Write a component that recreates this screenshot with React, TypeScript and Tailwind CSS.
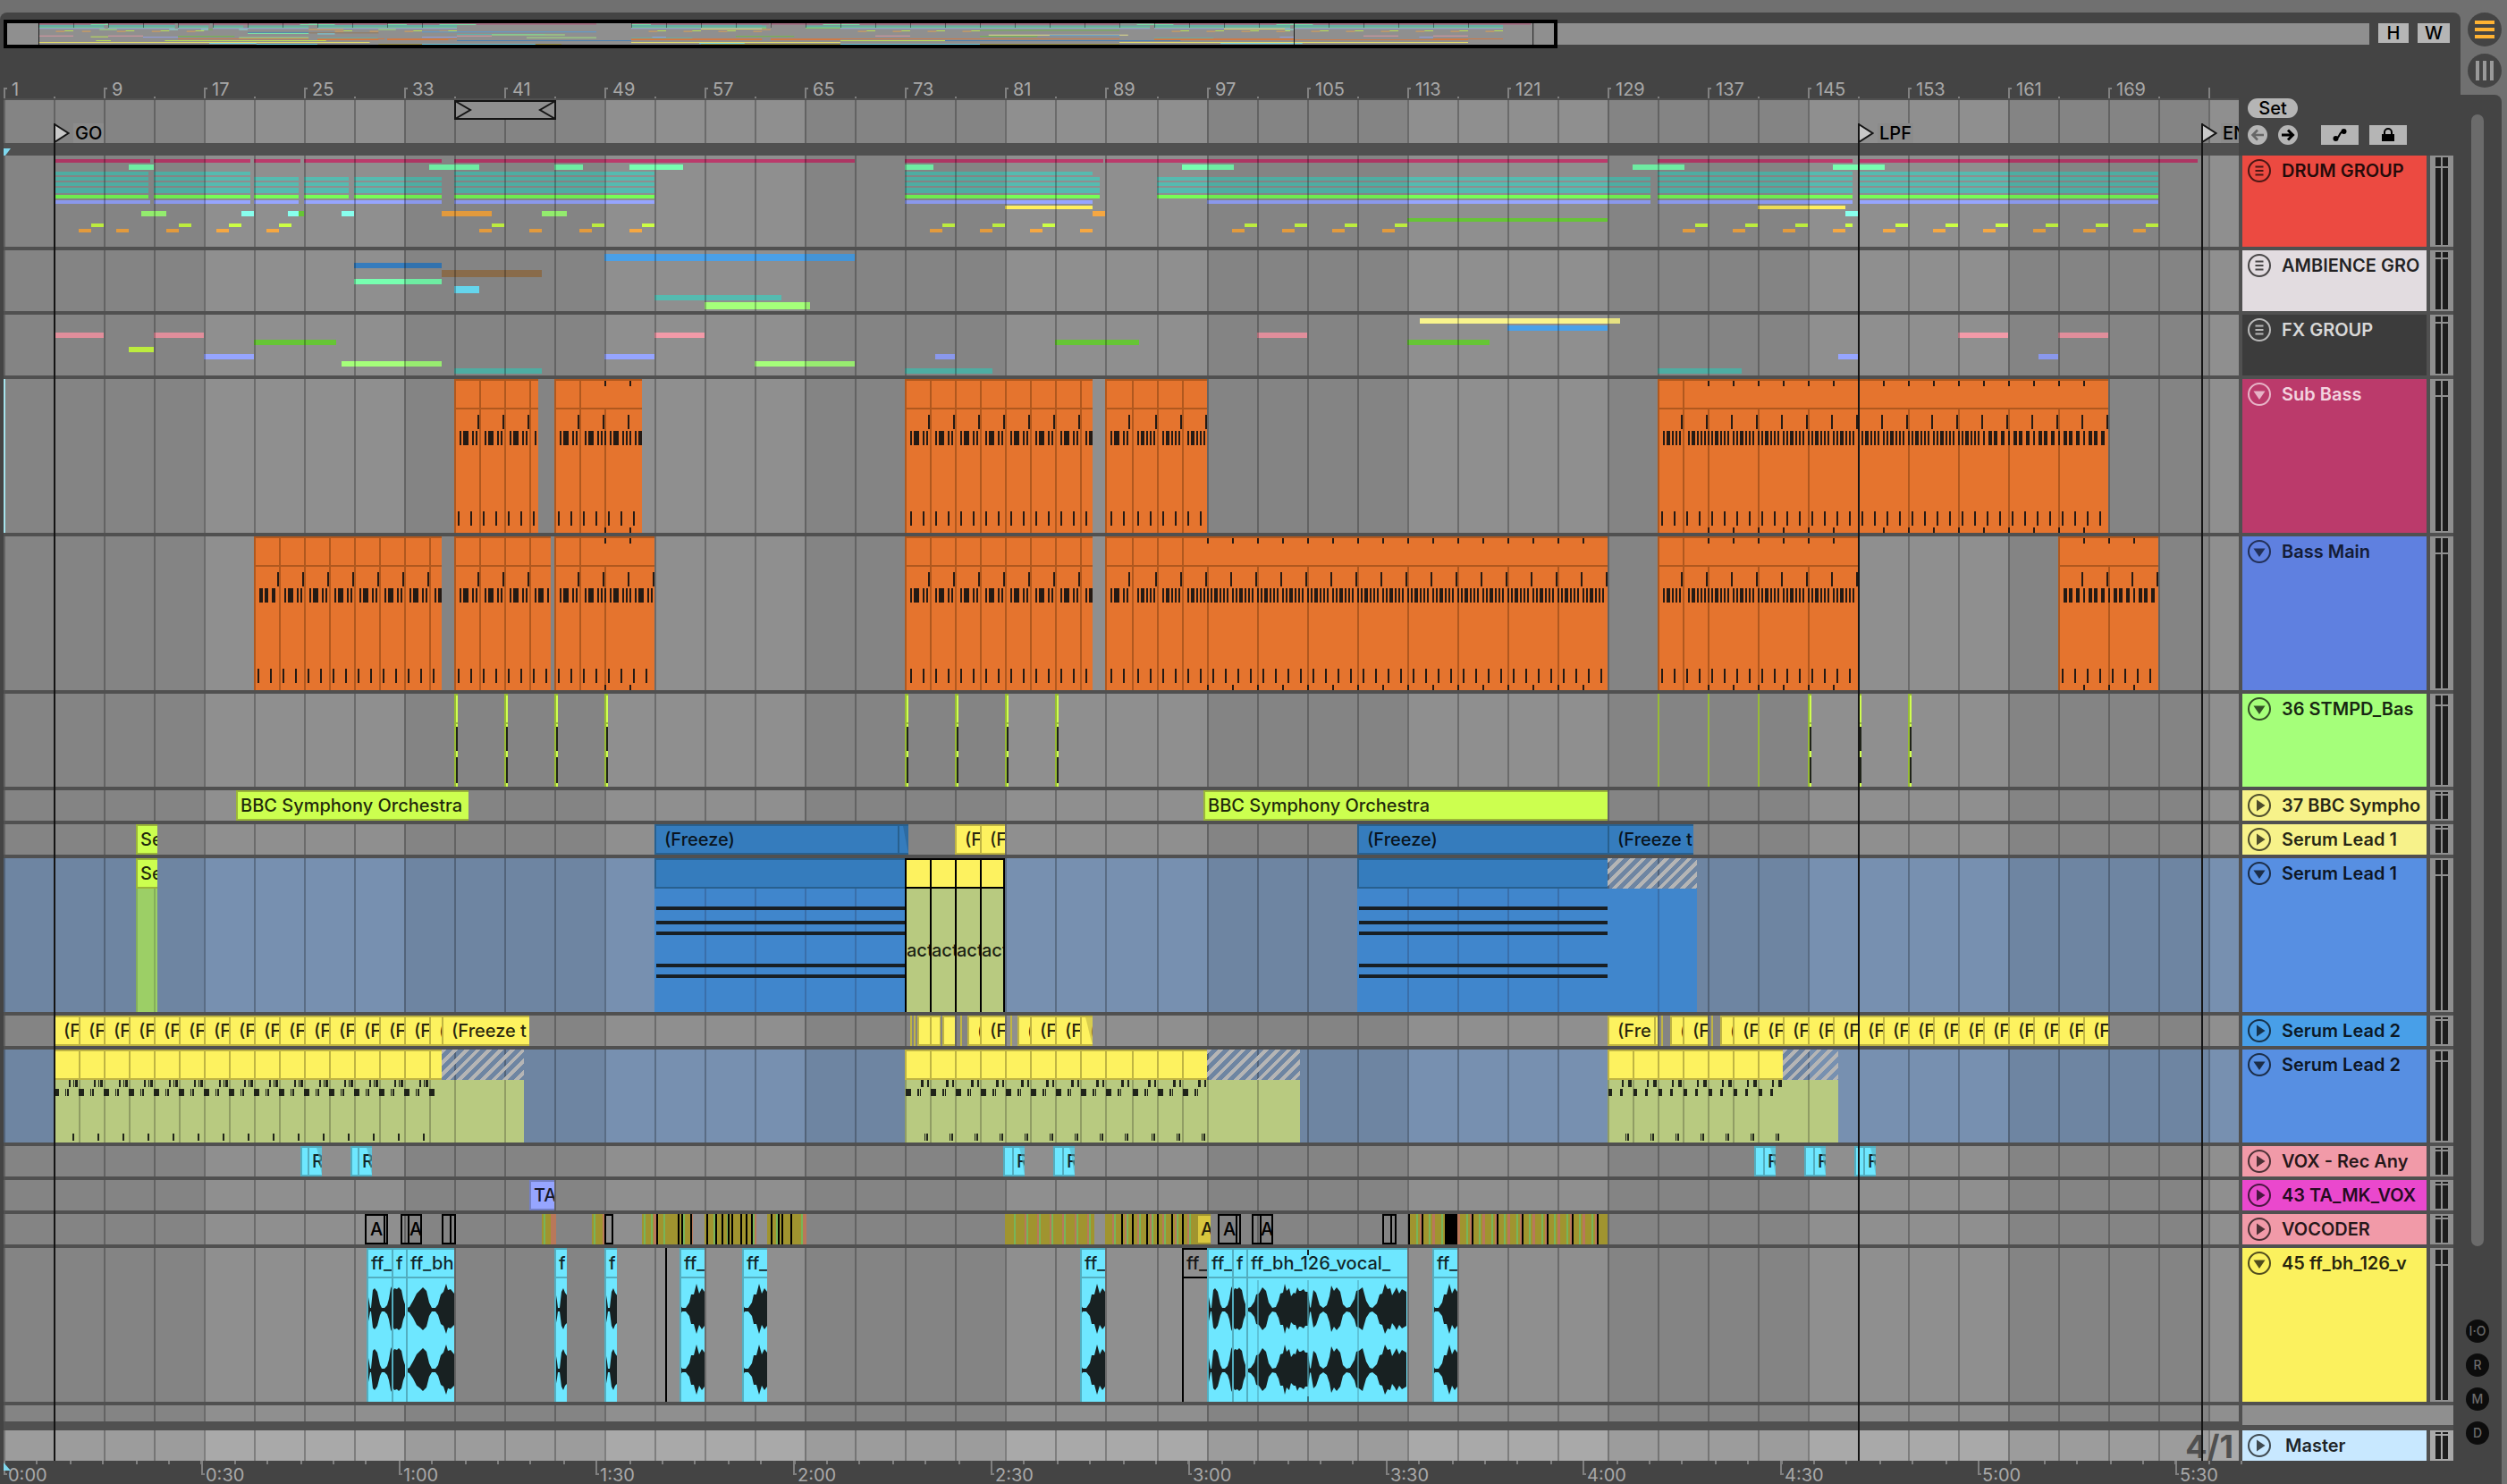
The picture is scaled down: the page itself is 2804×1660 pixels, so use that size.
import React from "react";

const BAR = 7.0056;
/** Horizontal position of a bar inside a lane, snapped to the 2px device grid. */
const X = (bar: number) => 2 * Math.round(BAR * (bar - 1));
const span = (from: number, to: number) => ({ left: X(from), width: X(to) - X(from) });

const BAR_LINES = Array.from({ length: 45 }, (_, i) => 1 + i * 4);
const DARK_BANDS = [1, 33, 65, 97, 129, 161].map((b) => [b, b + 16] as const);

type Range = [number, number];
type Strip = { y: number; h: number; tone: string; at: Range[] };

const CRIMSON = "text-[#bb3a6b]";
const MINT = "text-[#77ffb0]";
const TEAL = "text-[#55bbb0]";
const GREEN = "text-[#77ff55]";
const PERI = "text-[#96a5ff]";
const YELLOW = "text-[#ffef5a]";
const LEAF = "text-[#9fff77]";
const ICE = "text-[#88ffee]";
const ORANGE = "text-[#f5a742]";
const FOREST = "text-[#66c535]";
const LIME = "text-[#ccff44]";
const SKY = "text-[#4aa0e8]";
const PINK = "text-[#f29aa8]";

const beats = (starts: number[], len = 1): Range[] => starts.map((s) => [s, s + len]);
const hats: Range[] = [[5, 12.5], [13, 20.65], [21, 24.5], [25, 28.5], [29, 36], [37, 53], [73, 88.5], [93, 132.5], [133, 148.6], [149, 173]];

const DRUMS: Strip[] = [
  { y: 4, h: 4, tone: CRIMSON, at: [[5, 12.65], [13, 20.65], [21, 24.65], [25, 36], [37, 69], [73, 88.85], [89, 129], [133, 148.6], [149, 176.2]] },
  { y: 10, h: 6, tone: MINT, at: [[11, 13], [35, 39], [45, 47.25], [51, 55.2], [73, 75.25], [95, 99.2], [131, 135.2], [147, 151.2]] },
  { y: 18, h: 4, tone: TEAL, at: [[5, 12.5], [13, 20.65], [37, 53], [73, 88], [133, 148.6], [149, 173]] },
  { y: 24, h: 4, tone: TEAL, at: hats },
  { y: 30, h: 4, tone: TEAL, at: hats },
  { y: 36, h: 6, tone: TEAL, at: hats },
  { y: 44, h: 4, tone: GREEN, at: hats },
  { y: 50, h: 4, tone: PERI, at: [[5, 12.65], [13, 20.65], [21, 24.5], [25, 36], [37, 53], [73, 88], [97, 132.5], [133, 148.6], [149, 173]] },
  { y: 56, h: 4, tone: YELLOW, at: [[81, 88], [141, 148]] },
  { y: 62, h: 6, tone: LEAF, at: [[12, 14], [44, 46]] },
  { y: 62, h: 6, tone: ICE, at: [[20, 21], [23.65, 24.5], [28, 29], [148, 149]] },
  { y: 62, h: 6, tone: FOREST, at: [[24.5, 25]] },
  { y: 62, h: 6, tone: ORANGE, at: [[36, 40], [88, 89]] },
  { y: 70, h: 4, tone: FOREST, at: [[113, 129]] },
  { y: 76, h: 4, tone: LIME, at: [...beats([8, 15, 19, 23, 40, 48, 52, 76, 80, 84, 100, 104, 108, 112, 136, 140, 144, 152, 156, 160, 164, 168, 172]), [148, 148.6]] },
  { y: 82, h: 4, tone: ORANGE, at: beats([7, 10, 14, 18, 22, 39, 43, 47, 51, 75, 79, 83, 87, 99, 103, 107, 111, 135, 139, 143, 147, 151, 155, 159, 163, 167, 171]) },
];

const AMBIENCE: Strip[] = [
  { y: 4, h: 8, tone: SKY, at: [[49, 69]] },
  { y: 14, h: 6, tone: "text-[#357cbd]", at: [[29, 36]] },
  { y: 22, h: 8, tone: "text-[#947450]", at: [[36, 44]] },
  { y: 32, h: 6, tone: MINT, at: [[29, 36]] },
  { y: 40, h: 8, tone: "text-[#6ee7ff]", at: [[37, 39]] },
  { y: 50, h: 6, tone: TEAL, at: [[53, 63.1]] },
  { y: 58, h: 8, tone: "text-[#a5ff7a]", at: [[57, 65.4]] },
];

const FX: Strip[] = [
  { y: 4, h: 6, tone: "text-[#f9f48c]", at: [[114, 130]] },
  { y: 12, h: 6, tone: SKY, at: [[121, 129]] },
  { y: 20, h: 6, tone: PINK, at: [[5, 9], [13, 17], [53, 57], [101, 105], [157, 161], [165, 169]] },
  { y: 28, h: 6, tone: FOREST, at: [[21, 27.5], [85, 91.7], [113, 119.6]] },
  { y: 36, h: 6, tone: LIME, at: [[11, 13]] },
  { y: 44, h: 6, tone: PERI, at: [[17, 21], [49, 53], [75.4, 77], [147.4, 149], [163.4, 165]] },
  { y: 52, h: 6, tone: "text-[#a5ff7a]", at: [[28, 36], [61, 69]] },
  { y: 60, h: 6, tone: TEAL, at: [[37, 43.9], [73, 80], [133, 139.8]] },
];

/* ---------- lane backgrounds ---------- */

function Grid() {
  return (
    <>
      {DARK_BANDS.map(([a, b]) => (
        <i key={a} className="absolute inset-y-0 bg-black/[0.075]" style={span(a, b)} />
      ))}
      {BAR_LINES.map((b) => (
        <i key={b} className="absolute inset-y-0 w-0.5 bg-black/25" style={{ left: X(b) }} />
      ))}
    </>
  );
}

function GroupStrips({ strips }: { strips: Strip[] }) {
  return (
    <>
      {strips.map((s, i) =>
        s.at.map(([a, b]) => (
          <i key={`${i}-${a}`} className={`absolute bg-current ${s.tone}`} style={{ ...span(a, b), top: s.y, height: s.h }} />
        )),
      )}
      <Grid />
    </>
  );
}

/* ---------- generic clips ---------- */

const CLIP = {
  lime: "bg-[#ccff4f] border-[#9bb53a]",
  yellow: "bg-[#fdf25f] border-[#bfb443]",
  blue: "bg-[#357cbd] border-[#28608f]",
  cyan: "bg-[#6ee7ff] border-[#53aec0]",
  peri: "bg-[#96a5ff] border-[#7480c5]",
  mustard: "bg-[#d9c73e] border-[#a0942f]",
};
type Tone = keyof typeof CLIP;

type ClipProps = { from: number; to: number; tone: Tone; pad?: "sm" | "lg"; children?: React.ReactNode };
/** Title bar of a clip: 34px high, text is cut where the clip ends. */
function Clip({ from, to, tone, pad = "sm", children }: ClipProps) {
  return (
    <div
      className={`absolute top-0 flex h-[34px] items-center overflow-hidden border-y-2 border-l-2 font-medium whitespace-nowrap text-black/85 ${CLIP[tone]} ${pad === "lg" ? "pl-[9px]" : "pl-[3px]"}`}
      style={span(from, to)}
    >
      {children}
    </div>
  );
}

function Line({ at, tone }: { at: number; tone: string }) {
  return <i className={`absolute inset-y-0 w-0.5 ${tone}`} style={{ left: X(at) }} />;
}

/* ---------- bass tracks ---------- */

type BassClip = { from: number; to: number; cuts: number[]; loops: number[] };
const every = (from: number, to: number, step = 2) => {
  const out: number[] = [];
  for (let b = from; b < to; b += step) out.push(b);
  return out;
};

const SUB_BASS: BassClip[] = [
  { from: 37, to: 43.65, cuts: every(37, 43.6), loops: [] },
  { from: 45, to: 52, cuts: [45, 47], loops: [49, 51] },
  { from: 73, to: 88, cuts: every(73, 88), loops: [] },
  { from: 89, to: 97, cuts: every(89, 97), loops: [] },
  { from: 133, to: 169, cuts: [133, 135], loops: every(137, 169) },
];
const BASS_MAIN: BassClip[] = [
  { from: 21, to: 36, cuts: every(21, 36), loops: [] },
  { from: 37, to: 44.7, cuts: every(37, 44), loops: [] },
  { from: 45, to: 53, cuts: [45, 47], loops: [49, 51] },
  { from: 73, to: 88, cuts: every(73, 88), loops: [] },
  { from: 89, to: 129, cuts: every(89, 97), loops: every(97, 129) },
  { from: 133, to: 149, cuts: [133, 135], loops: every(137, 149) },
  { from: 165, to: 173, cuts: [165], loops: [167, 169, 171] },
];

function notesFor(cell: number, loop: boolean): Range[] {
  if (cell === 21 || cell >= 159) return loop ? [[0, 2], [6, 4], [12, 4], [20, 4]] : [[6, 4], [12, 4], [20, 4]];
  if (cell >= 91) return loop ? [[0, 2], [4, 2], [8, 4], [14, 2], [18, 2], [22, 2]] : [[6, 2], [10, 4], [16, 2], [20, 2], [24, 2]];
  return loop ? [[0, 2], [6, 2], [10, 6], [20, 2], [24, 2]] : [[6, 2], [10, 6], [20, 2], [24, 2]];
}

function BassTrack({ clips }: { clips: BassClip[] }) {
  return (
    <>
      <Grid />
      {clips.map((c) => {
        const w = X(c.to) - X(c.from);
        const o = (b: number) => X(b) - X(c.from);
        const low = c.from >= 73 && c.from < 97 ? 6 : 4;
        return (
          <div key={c.from} className="absolute inset-y-0 overflow-hidden bg-[#e5742e]" style={span(c.from, c.to)}>
            <svg width={w} height="172" className="block" shapeRendering="crispEdges">
              <g className="fill-[#b0581e]">
                <rect x="0" y="0" width={w} height="2" />
                <rect x="0" y="32" width={w} height="2" />
                {c.cuts.map((b) => <rect key={b} x={o(b)} y="0" width="2" height="172" />)}
                {c.loops.filter((b) => (b - 1) % 4 === 0).map((b) => <rect key={b} x={o(b)} y="34" width="2" height="138" />)}
              </g>
              <g className="fill-[#241a14]">
                {c.loops.map((b) => (
                  <React.Fragment key={b}>
                    <rect x={o(b)} y="2" width="2" height="6" />
                    <rect x={o(b)} y="166" width="2" height="6" />
                  </React.Fragment>
                ))}
                {[...c.cuts, ...c.loops].map((b) => (
                  <React.Fragment key={b}>
                    <rect x={o(b) + 26} y="40" width="2" height="16" />
                    {notesFor(b, c.loops.includes(b)).map(([x, nw]) => (
                      <rect key={x} x={o(b) + x} y="58" width={nw} height="16" />
                    ))}
                    <rect x={o(b) + low} y="148" width="2" height="16" />
                    <rect x={o(b) + low + 14} y="148" width="2" height="16" />
                  </React.Fragment>
                ))}
              </g>
            </svg>
          </div>
        );
      })}
    </>
  );
}

/* ---------- audio hits of track 36 ---------- */

function StompTrack() {
  return (
    <>
      <Grid />
      {[133, 137, 141].map((b) => <Line key={b} at={b} tone="bg-[#97bb35]" />)}
      {[37, 41, 45, 49, 73, 77, 81, 85, 145, 149, 153].map((b) => (
        <svg key={b} width="4" height="104" className="absolute top-0" style={{ left: X(b) }} shapeRendering="crispEdges">
          <rect width="4" height="104" className="fill-[#97bb35]" />
          <rect x="2" y="2" width="2" height="30" className="fill-[#d0ff50]" />
          <rect x="2" y="34" width="2" height="70" className="fill-[#d0ff50]" />
          <rect x="2" y="37" width="2" height="27" className="fill-[#20241a]" />
          <rect x="2" y="71" width="2" height="29" className="fill-[#20241a]" />
        </svg>
      ))}
    </>
  );
}

/* ---------- Serum tracks ---------- */

const HATCH = "bg-[repeating-linear-gradient(135deg,#b5b5b5_0_4px,transparent_4px_9px)]";

function BodyLines({ from, to }: { from: number; to: number }) {
  return (
    <>
      {BAR_LINES.filter((b) => b > from && b < to).map((b) => (
        <i key={b} className="absolute inset-y-0 w-0.5 bg-[#396fab]" style={{ left: X(b) - X(from) }} />
      ))}
    </>
  );
}

function ChordClip({ from, to }: { from: number; to: number }) {
  return (
    <>
      <Clip from={from} to={to} tone="blue" />
      <div className="absolute top-[34px] bottom-0 overflow-hidden bg-[#4086cc]" style={span(from, to)}>
        <BodyLines from={from} to={to} />
        <svg width="100%" height="138" className="absolute inset-0 fill-[#181f24]" shapeRendering="crispEdges">
          {[20, 36, 48, 84, 96].map((y) => <rect key={y} x="2" y={y} width="100%" height="4" />)}
        </svg>
      </div>
    </>
  );
}

function SerumLead1Small() {
  return (
    <>
      <Grid />
      <Clip from={11.6} to={13.3} tone="lime">Se</Clip>
      <Clip from={53} to={73.2} tone="blue" pad="lg">(Freeze)</Clip>
      <Line at={72.4} tone="bg-[#28608f]" />
      <svg width="6" height="30" className="absolute top-0.5 fill-[#28608f]/60" style={{ left: X(73.2) - 6 }}>
        <path d="M0 0H6V30C4 22 2 10 0 0Z" />
      </svg>
      <Clip from={77} to={79} tone="yellow" pad="lg">(F</Clip>
      <Clip from={79} to={81} tone="yellow" pad="lg">(F</Clip>
      <Clip from={109} to={129} tone="blue" pad="lg">(Freeze)</Clip>
      <Clip from={129} to={135.9} tone="blue" pad="lg">(Freeze t</Clip>
    </>
  );
}

function SerumLead1() {
  return (
    <>
      <Grid />
      <Clip from={11.6} to={13.3} tone="lime">Se</Clip>
      <div className="absolute top-[34px] bottom-0 border-l-2 border-[#84ae5b] bg-[#9ccf66]" style={span(11.6, 13.3)} />
      <Line at={13} tone="top-[34px] bg-[#84ae5b]" />
      <ChordClip from={53} to={73} />
      {[73, 75, 77, 79].map((b) => (
        <div key={b} className={`absolute inset-y-0 flex flex-col border-l-2 border-black bg-[#b8ca80] ${b === 79 ? "border-r-2" : ""}`} style={span(b, b + 2)}>
          <div className="h-[34px] border-y-2 border-black bg-[#fdf25f]" />
          <div className="flex flex-1 items-center overflow-hidden font-medium text-black/85">act</div>
        </div>
      ))}
      <ChordClip from={109} to={129} />
      <div className="absolute inset-y-0 flex flex-col" style={span(129, 136.2)}>
        <div className={`h-[34px] ${HATCH}`} />
        <div className="relative flex-1 bg-[#4086cc]">
          <BodyLines from={129} to={136} />
        </div>
      </div>
    </>
  );
}

type Title = [number, number, string];
const LEAD2_TITLES: Title[] = [
  ...every(5, 35).map((b): Title => [b, b + 2, "(F"]),
  [35, 36, "("], [36, 43, "(Freeze t"],
  [74, 74.9, ""], [75, 75.5, ""], [76, 76.9, ""],
  [78, 79, "("], [79, 81, "(F"], [82, 83, "("], [83, 85, "(F"], [85, 87, "(F"], [87, 88, "("],
  [129, 133, "(Fre"], [134, 135, "("], [135, 137, "(F"], [138, 139, "("],
  ...every(139, 169).map((b): Title => [b, b + 2, "(F"]),
];

function SerumLead2Small() {
  return (
    <>
      <Grid />
      {[73.4, 73.7, 75.7, 75.9, 77.4, 81.4, 133.3, 137.3].map((b) => <Line key={b} at={b} tone="bg-[#bfb443]" />)}
      {LEAD2_TITLES.map(([a, b, t]) => (
        <Clip key={a} from={a} to={b} tone="yellow" pad="lg">{t}</Clip>
      ))}
      <Line at={132.75} tone="bg-[#bfb443]" />
      <svg width="8" height="30" className="absolute top-0.5 fill-[#bfb443]/60" style={{ left: X(88) - 8 }}>
        <path d="M0 0H8V30C5 22 3 10 0 0Z" />
      </svg>
    </>
  );
}

function ArpClip({ from, to, tail, a, b, c }: { from: number; to: number; tail: number; a: Range[]; b: Range[]; c: Range[] }) {
  const cells = every(from, to);
  const o = (bar: number) => X(bar) - X(from);
  return (
    <>
      <div className="absolute top-0 h-[34px] border-y-2 border-[#bfb443] bg-[#fdf25f]" style={span(from, to)}>
        {cells.map((s) => <i key={s} className="absolute inset-y-0 w-0.5 bg-[#bfb443]" style={{ left: o(s) }} />)}
      </div>
      <div className={`absolute top-0 h-[34px] ${HATCH}`} style={span(to, tail)} />
      <div className="absolute top-[34px] bottom-0 bg-[#b8ca80]" style={span(from, tail)}>
        <svg width="100%" height="70" className="absolute inset-0" shapeRendering="crispEdges">
          <g className="fill-[#909d64]">
            {cells.map((s) => <rect key={s} x={o(s)} y="0" width="2" height="70" />)}
            {BAR_LINES.filter((l) => l >= to && l < tail).map((l) => <rect key={l} x={o(l)} y="0" width="2" height="70" />)}
          </g>
          <g className="fill-[#20241a]">
            {cells.map((s) => (
              <React.Fragment key={s}>
                {o(s) + 20 < o(to) && a.map(([x, w]) => <rect key={x} x={o(s) + x} y="0" width={w} height="8" />)}
                {b.filter(([x]) => o(s) + x + 2 < o(to)).map(([x, w]) => <rect key={x} x={o(s) + x} y="10" width={w} height="8" />)}
                {o(s) + 26 < o(to) && c.map(([x, w]) => <rect key={x} x={o(s) + x} y="60" width={w} height="8" />)}
              </React.Fragment>
            ))}
          </g>
        </svg>
      </div>
    </>
  );
}

function SerumLead2() {
  return (
    <>
      <Grid />
      <ArpClip from={5} to={36} tail={42.5} a={[[17, 2], [22, 1], [24, 3]]} b={[[0, 6], [13, 1], [15, 2]]} c={[[21, 2]]} />
      <ArpClip from={73} to={97} tail={104.5} a={[[18, 3], [25, 2]]} b={[[1, 6], [14, 2], [17, 1]]} c={[[22, 1], [24, 2]]} />
      <ArpClip from={129} to={143} tail={147.4} a={[[16, 2], [23, 4]]} b={[[1, 4], [14, 3]]} c={[[20, 1], [22, 2]]} />
    </>
  );
}

/* ---------- vocals ---------- */

function VoxTrack() {
  return (
    <>
      <Grid />
      {[24.65, 28.65, 80.8, 84.8, 140.75, 144.75, 148.75].map((b) => (
        <React.Fragment key={b}>
          <Clip from={b} to={b + 0.65} tone="cyan" />
          <Clip from={b + 0.65} to={b + 1.75} tone="cyan">R</Clip>
          <svg width="6" height="30" className="absolute top-0.5 fill-[#53aec0]/60" style={{ left: X(b + 1.75) - 6 }}>
            <path d="M0 0H6V30C4 22 3 8 0 0Z" />
          </svg>
        </React.Fragment>
      ))}
    </>
  );
}

type Weave = { from: number; to: number; green: number[]; salmon: number[]; black: number[] };
const WEAVES: Weave[] = [
  { from: 602, to: 618, green: [604], salmon: [612, 614, 616], black: [] },
  { from: 658, to: 672, green: [660], salmon: [670], black: [] },
  { from: 714, to: 771, green: [716, 724, 738, 760], salmon: [727, 769], black: [730, 754, 758, 768] },
  { from: 784, to: 842, green: [794, 809, 824, 838], salmon: [840], black: [786, 796, 803, 810, 814, 824, 830, 836] },
  { from: 854, to: 898, green: [864, 880, 892], salmon: [894, 896], black: [858, 866, 870, 880] },
  { from: 1120, to: 1220, green: every(1130, 1218, 14), salmon: every(1142, 1220, 14), black: [] },
  { from: 1232, to: 1334, green: every(1242, 1334, 14), salmon: every(1240, 1334, 14), black: [1250, 1262, 1278, 1290, 1306, 1318] },
  { from: 1571, to: 1794, green: every(1580, 1790, 14), salmon: every(1584, 1794, 14), black: [1571, 1586, 1642, 1670, 1698, 1726, 1754, 1782] },
];
const BOXES: [number, number, number, string][] = [
  [404, 430, 423, "A"], [444, 468, 450, "A"], [490, 506, 497, ""], [672, 682, 682, ""],
  [1358, 1384, 1376, "A"], [1396, 1420, 1403, "A"], [1542, 1558, 1549, ""],
];

function VocoderTrack() {
  return (
    <>
      <Grid />
      {WEAVES.map((w) => (
        <svg key={w.from} width={w.to - w.from} height="34" className="absolute top-0 bg-[#a0942f]" style={{ left: w.from }} shapeRendering="crispEdges">
          <g className="fill-[#b9785a]">{w.salmon.map((x) => <rect key={x} x={x - w.from} width="3" height="34" />)}</g>
          <g className="fill-[#77b559]">{w.green.map((x) => <rect key={x} x={x - w.from} width="2" height="34" />)}</g>
          <g className="fill-black">
            {w.black.map((x) => <rect key={x} x={x - w.from} width="2" height="34" />)}
            {w.from === 1571 && <rect x="41" width="14" height="34" />}
          </g>
        </svg>
      ))}
      <Clip from={96.2} to={97.35} tone="mustard">A</Clip>
      {BOXES.map(([a, b, cut, t]) => (
        <div key={a} className="absolute inset-y-0 flex items-center overflow-hidden border-2 border-black font-medium text-black" style={{ left: a, width: b - a }}>
          <i className="absolute inset-y-0 w-0.5 bg-black" style={{ left: cut - a }} />
          <span className={cut - a < 10 ? "pl-2" : "pl-1"}>{t}</span>
        </div>
      ))}
    </>
  );
}

type Env = [number, number][];
const ENV_A: Env = [[0, 4], [1, 24], [2, 14], [4, 2], [5, 2], [7, 22], [9, 24], [12, 20], [15, 6], [17, 2], [20, 2], [23, 5], [25, 12], [27, 24], [28, 26]];
const ENV_B: Env = [[1, 20], [3, 24], [6, 23], [8, 25], [11, 22], [13, 12], [15, 6]];
const ENV_C: Env = [[1, 2], [4, 3], [8, 10], [12, 18], [16, 22], [19, 25], [23, 21], [26, 8], [29, 2], [33, 2], [36, 6], [39, 17], [42, 20], [45, 29], [47, 22], [50, 23], [54, 18]];
const ENV_FF: Env = [[1, 5], [3, 2], [7, 2], [11, 8], [13, 17], [16, 17], [19, 29], [22, 18], [25, 24], [28, 20]];
const ENV_F: Env = [[1, 22], [3, 10], [4, 2], [6, 2], [8, 20], [10, 24], [12, 19], [15, 15]];
const ENV_LONG: Env = [
  [2, 2], [5, 3], [9, 9], [11, 17], [14, 18], [18, 25], [22, 21], [25, 8], [29, 2], [33, 3], [36, 10], [38, 18], [41, 19], [43, 29], [45, 21], [48, 24], [50, 15], [53, 19], [55, 18], [57, 25],
  [59, 21], [61, 21], [64, 23], [66, 20], [69, 20], [71, 3], [72, 2], [75, 22], [78, 19], [82, 5], [86, 2], [90, 5], [93, 15], [95, 27], [98, 21], [101, 25], [105, 20], [108, 6], [112, 2], [116, 3],
  [121, 12], [123, 21], [126, 22], [130, 25], [134, 10], [138, 3], [141, 2], [146, 7], [149, 17], [152, 18], [155, 29], [158, 23], [161, 24], [163, 16], [166, 21], [168, 25], [171, 18], [174, 23], [179, 20],
];
const AUDIO: { x: number; w: number; label: string; env: Env }[] = [
  { x: 406, w: 28, label: "ff_", env: ENV_A },
  { x: 434, w: 16, label: "f", env: ENV_B },
  { x: 450, w: 54, label: "ff_bh", env: ENV_C },
  { x: 616, w: 14, label: "f", env: ENV_F },
  { x: 672, w: 14, label: "f", env: ENV_F },
  { x: 756, w: 28, label: "ff_", env: ENV_FF },
  { x: 826, w: 28, label: "ff_", env: ENV_FF },
  { x: 1204, w: 28, label: "ff_", env: ENV_FF },
  { x: 1346, w: 28, label: "ff_", env: ENV_A },
  { x: 1374, w: 16, label: "f", env: ENV_B },
  { x: 1390, w: 180, label: "ff_bh_126_vocal_", env: ENV_LONG },
  { x: 1598, w: 28, label: "ff_", env: ENV_FF },
];

function wave(env: Env, mid: number) {
  const top = env.map(([x, a]) => `${x} ${mid - a}`);
  const bottom = [...env].reverse().map(([x, a]) => `${x} ${mid + Math.round(a * 0.92)}`);
  return `M${top.join("L")}L${bottom.join("L")}Z`;
}

function AudioTrack() {
  return (
    <>
      <Grid />
      {AUDIO.map((c) => (
        <div key={c.x} className="absolute inset-y-0 flex flex-col overflow-hidden border-l-2 border-[#53aec0] bg-[#6ee7ff]" style={{ left: c.x, width: c.w }}>
          <div className="flex h-[34px] items-center border-y-2 border-[#53aec0] pl-[3px] font-medium whitespace-nowrap text-black/85">{c.label}</div>
          <svg width={c.w - 2} height="138" viewBox={`2 0 ${c.w - 2} 138`} className="fill-[#182122]">
            <path d={wave(c.env, 35)} />
            <path d={wave(c.env, 103)} />
          </svg>
        </div>
      ))}
      <i className="absolute top-0.5 h-1.5 w-0.5 bg-[#182122]" style={{ left: X(105) }} />
      <i className="absolute bottom-0 h-1.5 w-0.5 bg-[#182122]" style={{ left: X(105) }} />
      {[101, 105, 109].map((b) => <Line key={b} at={b} tone="top-9 bg-[#53aec0]/60" />)}
      <Line at={53.85} tone="bg-black" />
      <Line at={95} tone="bg-black" />
      <div className="absolute top-0 flex h-[34px] items-center overflow-hidden border-y-2 border-l-2 border-black pl-[3px] font-medium text-black/85" style={span(95, 97)}>ff_</div>
    </>
  );
}

/* ---------- track list ---------- */

type Track = { name: string; h: string; bg: string; ink?: string; icon: "group" | "open" | "closed"; seg: string; lane?: string; body: React.ReactNode };
const H34 = "h-[34px]";
const TRACKS: Track[] = [
  { name: "DRUM GROUP", h: "h-[102px]", bg: "bg-[#ec4a41]", icon: "group", seg: "h-2.5", body: <GroupStrips strips={DRUMS} /> },
  { name: "AMBIENCE GRO", h: "h-[68px]", bg: "bg-[#e2dce0]", icon: "group", seg: "h-1.5", body: <GroupStrips strips={AMBIENCE} /> },
  { name: "FX GROUP", h: "h-[68px]", bg: "bg-[#3c3c3c]", ink: "text-[#d8d8d8]", icon: "group", seg: "h-1.5", body: <GroupStrips strips={FX} /> },
  { name: "Sub Bass", h: "h-[172px]", bg: "bg-[#bb3a6b]", ink: "text-[#f3d3df]", icon: "open", seg: "h-4", body: <><BassTrack clips={SUB_BASS} /><i className="absolute inset-y-0 left-0 w-0.5 bg-[#a6e3ec]" /></> },
  { name: "Bass Main", h: "h-[172px]", bg: "bg-[#5f80e0]", ink: "text-[#141c36]", icon: "open", seg: "h-4", body: <BassTrack clips={BASS_MAIN} /> },
  { name: "36 STMPD_Bas", h: "h-[104px]", bg: "bg-[#a5ff7a]", icon: "open", seg: "h-2.5", body: <StompTrack /> },
  { name: "37 BBC Sympho", h: H34, bg: "bg-[#f7f28a]", icon: "closed", seg: "h-0.5", body: <><Grid /><Clip from={19.56} to={38.1} tone="lime">BBC Symphony Orchestra</Clip><Clip from={96.8} to={129} tone="lime">BBC Symphony Orchestra</Clip></> },
  { name: "Serum Lead 1", h: H34, bg: "bg-[#f7f28a]", icon: "closed", seg: "h-0.5", body: <SerumLead1Small /> },
  { name: "Serum Lead 1", h: "h-[172px]", bg: "bg-[#578fe2]", icon: "open", seg: "h-4", lane: "bg-[#7790b0]", body: <SerumLead1 /> },
  { name: "Serum Lead 2", h: H34, bg: "bg-[#489fe8]", icon: "closed", seg: "h-0.5", body: <SerumLead2Small /> },
  { name: "Serum Lead 2", h: "h-[104px]", bg: "bg-[#578fe2]", icon: "open", seg: "h-2.5", lane: "bg-[#7790b0]", body: <SerumLead2 /> },
  { name: "VOX - Rec Any", h: H34, bg: "bg-[#f19aa8]", icon: "closed", seg: "h-0.5", body: <VoxTrack /> },
  { name: "43 TA_MK_VOX", h: H34, bg: "bg-[#ea48cd]", icon: "closed", seg: "h-0.5", body: <><Grid /><Clip from={43} to={45} tone="peri">TA</Clip></> },
  { name: "VOCODER", h: H34, bg: "bg-[#f19aa8]", icon: "closed", seg: "h-0.5", body: <VocoderTrack /> },
  { name: "45 ff_bh_126_v", h: "h-[172px]", bg: "bg-[#fbf15e]", icon: "open", seg: "h-4", body: <AudioTrack /> },
];

function FoldIcon({ kind }: { kind: Track["icon"] }) {
  return (
    <svg width="26" height="26" viewBox="0 0 26 26" className="block fill-none stroke-current stroke-2">
      <circle cx="13" cy="13" r="12" />
      {kind === "group" && <path d="M8.5 8.5h9M8.5 13h9M8.5 17.5h9" />}
      {kind === "open" && <path d="M6.5 9.5h13L13 19z" className="fill-current" stroke="none" />}
      {kind === "closed" && <path d="M10 6.5v13l9.5-6.5z" className="fill-current" stroke="none" />}
    </svg>
  );
}

function TrackHeader({ name, bg, ink = "text-black/85", icon, inset = "gap-3" }: { name: string; bg: string; ink?: string; icon: Track["icon"]; inset?: string }) {
  return (
    <div className={`w-[206px] shrink-0 overflow-hidden ${bg} ${ink}`}>
      <div className={`flex h-[34px] items-center pl-1.5 ${inset}`}>
        <button type="button" aria-label={`Fold ${name}`} className="shrink-0 opacity-80">
          <FoldIcon kind={icon} />
        </button>
        <span className="font-semibold whitespace-nowrap">{name}</span>
      </div>
    </div>
  );
}

function Meter({ seg, bg = "bg-[#8f8f8f]" }: { seg: string; bg?: string }) {
  return (
    <div className={`flex w-[26px] shrink-0 gap-0.5 py-0.5 pl-1.5 ${bg}`}>
      {[0, 1].map((k) => (
        <div key={k} className="flex w-1.5 flex-col gap-0.5">
          <i className={`bg-[#1c1c1c] ${seg}`} />
          <i className="flex-1 bg-[#1c1c1c]" />
        </div>
      ))}
    </div>
  );
}

/* ---------- overview strip ---------- */

const ox = (b: number) => 9.75 * (b - 1);
const OVERVIEW_ROWS: { y: number; tone: string; at: Range[] }[] = [
  { y: 17, tone: "text-[#e5742e]", at: BASS_MAIN.map((c) => [c.from, c.to]) },
  { y: 18, tone: "text-[#e5742e]", at: [[37, 44], [45, 52], [73, 88], [89, 97], [133, 169]] },
  { y: 19, tone: "text-[#357cbd]", at: [[53, 73], [109, 129], [129, 136]] },
  { y: 19, tone: "text-[#ccff44]", at: [[11.6, 13.3], [19.5, 38], [97, 109]] },
  { y: 21, tone: "text-[#fdf25f]", at: [[5, 43], [73, 97], [129, 169]] },
  { y: 22, tone: "text-[#6ee7ff]", at: [[24.6, 30], [80.8, 86], [140.6, 150]] },
  { y: 23, tone: "text-[#a0942f]", at: [[44, 65], [81, 97], [113, 129]] },
  { y: 23, tone: "text-[#6ee7ff]", at: [[30, 37], [49, 62], [97, 113]] },
];

function Overview() {
  const groups: [Strip[], number, number][] = [[DRUMS, 0, 0.105], [AMBIENCE, 9, 0.06], [FX, 12.5, 0.06]];
  return (
    <div className="relative flex-1">
      <div className="mt-1 h-6 overflow-hidden bg-[#8f8f8f]">
        <svg width="1738" height="24" className="block" aria-label="Arrangement overview">
          <g className="opacity-75">
            {groups.map(([strips, y0, k], g) =>
              strips.map((s, i) =>
                s.at.map(([a, b]) => (
                  <rect key={`${g}-${i}-${a}`} x={ox(a)} y={y0 + s.y * k} width={ox(b) - ox(a)} height="1" className={`fill-current ${s.tone}`} />
                )),
              ),
            )}
            {OVERVIEW_ROWS.map((r, i) =>
              r.at.map(([a, b]) => <rect key={`${i}-${a}`} x={ox(a)} y={r.y} width={ox(b) - ox(a)} height="1" className={`fill-current ${r.tone}`} />),
            )}
          </g>
          {BAR_LINES.filter((b) => b >= 5 && b < 173 && (b < 53 || b > 72)).map((b) => (
            <rect key={b} x={ox(b)} y="0" width="1" height="5" className="fill-black/40" />
          ))}
          {[5, 149, 176.4].map((b) => <rect key={b} x={ox(b)} y="0" width="1" height="24" className="fill-black/80" />)}
        </svg>
      </div>
      <div className="absolute top-0 left-0 h-8 w-[1738px] border-4 border-black" />
    </div>
  );
}

/* ---------- rulers ---------- */

function BarRuler() {
  return (
    <div className="relative mt-8 mr-[240px] h-6 text-[#a8a8a8]">
      {every(1, 180, 4).map((b) =>
        (b - 1) % 8 === 0 ? (
          <React.Fragment key={b}>
            <i className="absolute bottom-0 h-3 w-0.5 bg-[#808080]" style={{ left: X(b) }} />
            {b < 177 && <i className="absolute bottom-2.5 h-0.5 w-1 bg-[#808080]" style={{ left: X(b) }} />}
            {b < 177 && <span className="absolute top-0.5 leading-6" style={{ left: X(b) + 9 }}>{b}</span>}
          </React.Fragment>
        ) : (
          <i key={b} className="absolute bottom-0 h-0.5 w-0.5 bg-[#808080]" style={{ left: X(b) }} />
        ),
      )}
    </div>
  );
}

const TIMES = ["0:00", "0:30", "1:00", "1:30", "2:00", "2:30", "3:00", "3:30", "4:00", "4:30", "5:00", "5:30"];
function TimeRuler() {
  return (
    <div className="relative mr-[240px] h-[26px] text-[#a8a8a8]">
      {Array.from({ length: 69 }, (_, i) => (
        <i key={i} className="absolute top-0 h-1 w-0.5 bg-[#808080]" style={{ left: 2 * Math.round((i * 220.8) / 12) }} />
      ))}
      {TIMES.map((t, i) => (
        <React.Fragment key={t}>
          <i className="absolute top-0 h-4 w-1 border-b-2 border-l-2 border-[#808080]" style={{ left: Math.round(i * 220.8) }} />
          <span className="absolute top-1 leading-6" style={{ left: Math.round(i * 220.8) + 5 }}>{t}</span>
        </React.Fragment>
      ))}
      <svg width="8" height="9" className="absolute top-0.5 left-0 fill-[#7fd8ee]"><path d="M0 0L8 9H0z" /></svg>
    </div>
  );
}

const LOCATORS: [number, string][] = [[5, "GO"], [149, "LPF"], [176.4, "END"]];
function Locators() {
  return (
    <div className="pointer-events-none absolute top-0 right-[240px] bottom-[26px] left-0 overflow-hidden">
      {LOCATORS.map(([b, label]) => (
        <div key={label} className="absolute top-7 bottom-0 border-l-2 border-[#141414]" style={{ left: X(b) }}>
          <div className="flex items-center gap-1">
            <svg width="18" height="22" className="-ml-0.5 shrink-0 fill-[#c8c8c8] stroke-[#141414] stroke-2"><path d="M1 1L16.500 11L1 21z" /></svg>
            <span className="bg-[#8b8b8b] px-0.5 leading-[22px] font-medium text-black">{label}</span>
          </div>
        </div>
      ))}
    </div>
  );
}

function ScrubArea() {
  return (
    <div className="relative min-w-0 flex-1 bg-[#505050] pt-0.5 pb-3.5">
      <div className="relative h-12 overflow-hidden bg-[#8f8f8f]">
        <Grid />
        <svg width="114" height="22" className="absolute top-0 fill-none stroke-[#141414] stroke-2" style={{ left: X(37) }} aria-label="Loop">
          <rect x="1" y="1" width="112" height="20" className="fill-[#8f8f8f]" />
          <path d="M1 1L18 11L1 21M113 1L96 11L113 21" />
        </svg>
      </div>
      <svg width="8" height="8" className="absolute bottom-0 left-0 fill-[#7fd8ee]"><path d="M0 0H8L2 8H0z" /></svg>
    </div>
  );
}

function SetPanel() {
  const key = "flex h-[22px] items-center justify-center bg-[#b5b5b5] text-black";
  return (
    <div className="flex w-[240px] shrink-0 flex-col gap-2 bg-[#444] pl-[10px]">
      <button type="button" className={`${key} w-14 rounded-full font-medium`}>Set</button>
      <div className="flex items-center">
        <button type="button" aria-label="Previous locator" className={`${key} w-[22px] rounded-full`}>
          <svg width="16" height="14" viewBox="0 0 16 14" className="fill-none stroke-[#666] stroke-[2.5]"><path d="M15 7H3M8 1.500L2.500 7L8 12.500" /></svg>
        </button>
        <button type="button" aria-label="Next locator" className={`${key} ml-3 w-[22px] rounded-full`}>
          <svg width="16" height="14" viewBox="0 0 16 14" className="fill-none stroke-black stroke-[3]"><path d="M1 7H13M8 1.500L13.500 7L8 12.500" /></svg>
        </button>
        <button type="button" aria-label="Automation mode" className={`${key} ml-[26px] w-[42px]`}>
          <svg width="18" height="16" viewBox="0 0 18 16"><path d="M4.500 12C10 11 7 5 13 4" className="fill-none stroke-black stroke-2" /><circle cx="4.500" cy="12" r="3" /><circle cx="13.500" cy="4" r="3" /></svg>
        </button>
        <button type="button" aria-label="Lock envelopes" className={`${key} ml-3 w-[42px]`}>
          <svg width="16" height="16" viewBox="0 0 16 16"><rect x="1" y="7" width="14" height="8" /><path d="M4 8V5a4 4 0 0 1 8 0v3" className="fill-none stroke-black stroke-2" /></svg>
        </button>
      </div>
    </div>
  );
}

function SideColumn() {
  return (
    <aside className="flex w-[52px] shrink-0 flex-col">
      <div className="flex h-[92px] flex-col items-end gap-2 pr-1.5">
        <button type="button" aria-label="Arrangement view" className="flex size-[38px] flex-col items-center justify-center gap-1 rounded-full bg-[#444]">
          {[0, 1, 2].map((k) => <i key={k} className="h-1 w-[22px] bg-[#ffb232]" />)}
        </button>
        <button type="button" aria-label="Session view" className="flex size-[38px] items-center justify-center gap-1 rounded-full bg-[#444]">
          {[0, 1, 2].map((k) => <i key={k} className="h-[22px] w-1 bg-[#999]" />)}
        </button>
      </div>
      <div className="mr-1.5 flex flex-1 flex-col rounded-tr-lg bg-[#444] pt-[22px] pb-11">
        <div className="mb-[82px] ml-3 w-3.5 flex-1 rounded-full bg-[#6b6b6b]" />
        <div className="ml-1.5 flex flex-col gap-3">
          {["I·O", "R", "M", "D"].map((t) => (
            <button key={t} type="button" className="size-[26px] rounded-full bg-[#0c0c0c] text-center text-sm leading-[26px] font-medium text-[#6b6b6b]">
              {t}
            </button>
          ))}
        </div>
      </div>
    </aside>
  );
}

export default function App() {
  return (
    <div className="flex min-h-screen w-full overflow-hidden bg-[#707070] pt-3.5 font-['Inter',sans-serif] text-[20px] leading-6">
      <main className="flex min-w-0 flex-1 flex-col rounded-t-lg bg-[#444] pt-2 pr-2 pl-1">
        <div className="flex h-8 items-start pr-1">
          <Overview />
          <button type="button" className="mt-1 ml-2.5 h-[22px] w-[34px] bg-[#b5b5b5] leading-[22px] font-medium text-black">H</button>
          <button type="button" className="mt-1 ml-2.5 h-[22px] w-9 bg-[#b5b5b5] leading-[22px] font-medium text-black">W</button>
        </div>
        <BarRuler />
        <div className="relative">
          <div className="flex h-16">
            <ScrubArea />
            <SetPanel />
          </div>
          <div className="flex flex-col gap-1 bg-[#505050]">
            {TRACKS.map((t, i) => (
              <section key={i} className={`flex gap-1 ${t.h}`}>
                <div className={`relative min-w-0 flex-1 overflow-hidden ${t.lane ?? "bg-[#8f8f8f]"}`}>{t.body}</div>
                <TrackHeader name={t.name} bg={t.bg} ink={t.ink} icon={t.icon} />
                <Meter seg={t.seg} />
              </section>
            ))}
            <div className="flex items-start gap-1">
              <div className="relative h-[18px] flex-1 overflow-hidden bg-[#8f8f8f]"><Grid /></div>
              <div className="h-[22px] w-[236px] bg-[#8f8f8f]" />
            </div>
            <section className="mt-0.5 flex h-[34px] gap-1">
              <div className="relative min-w-0 flex-1 overflow-hidden bg-[#a9a9a9]">
                <Grid />
                <span className="absolute right-1.5 bottom-0 text-[36px] leading-8 font-bold text-[#505050]">4/1</span>
              </div>
              <TrackHeader name="Master" bg="bg-[#c8e8ff]" icon="closed" inset="gap-4" />
              <Meter seg="h-0.5" bg="bg-[#a9a9a9]" />
            </section>
          </div>
          <TimeRuler />
          <Locators />
        </div>
      </main>
      <SideColumn />
    </div>
  );
}
